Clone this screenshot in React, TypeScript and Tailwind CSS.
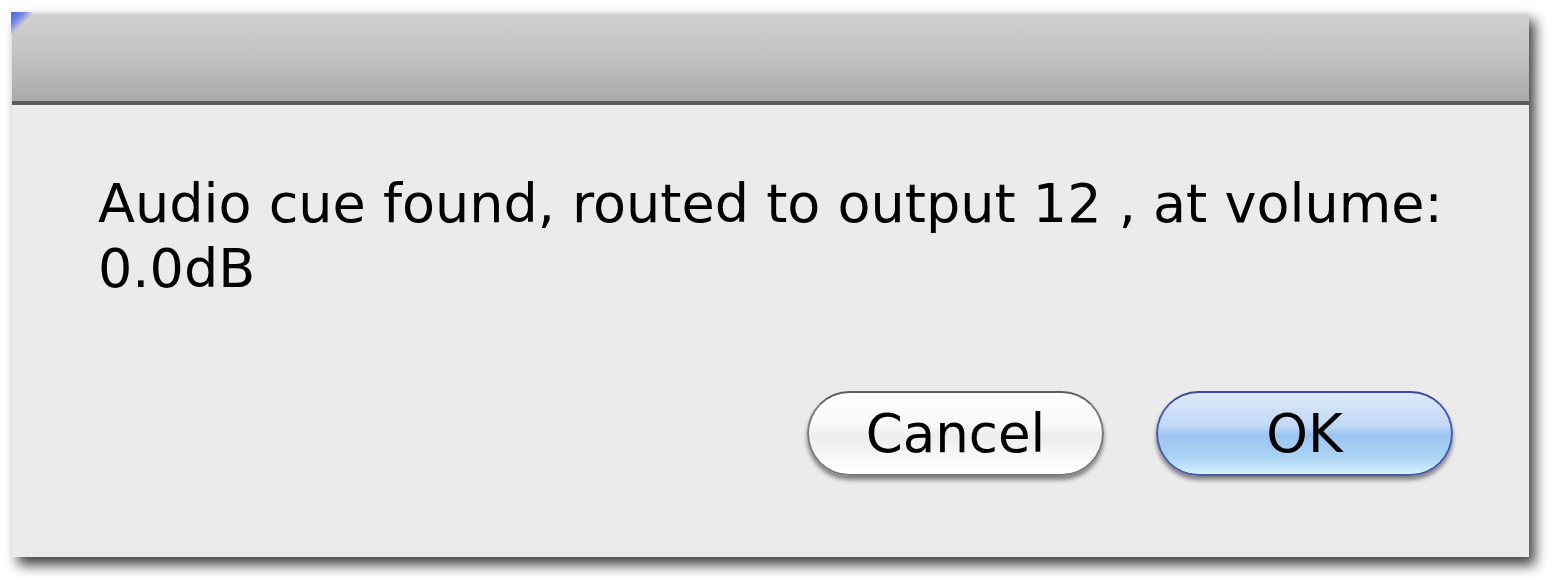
import React from "react";

function AquaButton({ label, primary }: { label: string; primary?: boolean }) {
  return (
    <button
      className={
        primary
          ? "relative w-[297px] h-[85px] rounded-full border-2 border-[#4a5aa8] border-t-[#3b4a9c] bg-[linear-gradient(to_bottom,#dbe9fa_0%,#c2d9f6_40%,#9cc4f1_52%,#acd4f5_80%,#d4f3ff_100%)] shadow-[0_4px_4px_rgba(0,0,0,0.45)] text-[53px] text-black"
          : "relative w-[297px] h-[85px] rounded-full border-2 border-[#7a7a7a] border-t-[#5e5e5e] bg-[linear-gradient(to_bottom,#ffffff_0%,#f8f8f8_40%,#ededed_52%,#f8f8f8_80%,#ffffff_100%)] shadow-[0_4px_4px_rgba(0,0,0,0.45)] text-[53px] text-black"
      }
      style={{ fontFamily: '"Lucida Grande", "DejaVu Sans", sans-serif' }}
    >
      {label}
    </button>
  );
}

export default function App() {
  return (
    <div className="w-[1550px] h-[579px] bg-white pl-[12px] pt-[12px]">
      <div className="relative w-[1517px] h-[545px] flex flex-col bg-[#ebebeb] shadow-[6px_8px_12px_rgba(0,0,0,0.75)]">
        {/* title bar */}
        <div className="relative h-[93px] border-t-2 border-[#e2e2e2] border-b-4 border-b-[#5a5a5a] bg-[linear-gradient(to_bottom,#d0d0d0_0%,#c2c2c2_50%,#a9a9a9_100%)]">
          <div className="absolute -left-px -top-[2px] w-[22px] h-[22px] bg-[linear-gradient(135deg,#4a62e0_0%,#7385e4_30%,transparent_55%)]" />
        </div>

        {/* message */}
        <div
          className="flex-1 flex flex-col pl-[86px] pr-[10px] pt-[66px] text-[54px] leading-[65px] text-black"
          style={{ fontFamily: '"Lucida Grande", "DejaVu Sans", sans-serif' }}
        >
          <p className="whitespace-nowrap">Audio cue found, routed to output 12 , at volume:</p>
          <p>0.0dB</p>

          <div className="mt-auto mb-[81px] flex justify-end gap-[52px] pr-[66px]">
            <AquaButton label="Cancel" />
            <AquaButton label="OK" primary />
          </div>
        </div>
      </div>
    </div>
  );
}
